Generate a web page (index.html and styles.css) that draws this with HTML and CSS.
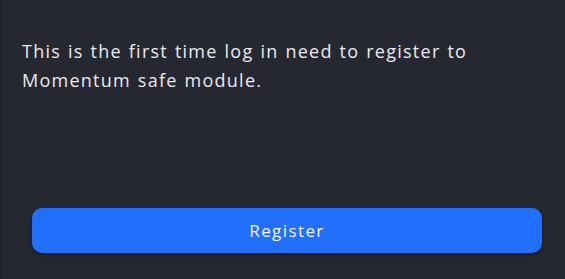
FILE: index.html
```html
<!DOCTYPE html>
<html lang="en">
<head>
<meta charset="utf-8">
<title>Register</title>
<link rel="stylesheet" href="styles.css">
</head>
<body>
<main class="panel">
  <p class="message">This is the first time log in need to register to Momentum safe module.</p>
  <button class="register-btn" type="button">Register</button>
</main>
</body>
</html>
```

FILE: styles.css
```css
html, body {
  margin: 0;
  padding: 0;
  height: 100%;
}

body {
  background: #252830;
  font-family: "Open Sans", "Noto Sans", sans-serif;
}

.panel {
  box-sizing: border-box;
  height: 100vh;
  display: flex;
  flex-direction: column;
  border-left: 2px solid #1f2228;
  padding: 0 23px 26px 20px;
}

.message {
  margin: 37px 0 0 0;
  color: #e9eaed;
  font-size: 18px;
  line-height: 29px;
  letter-spacing: 1.25px;
  word-spacing: 1px;
  max-width: 500px;
}

.register-btn {
  margin: auto 0 0 10px;
  height: 45px;
  border: none;
  border-radius: 10px;
  background: #226ffc;
  color: #f3f6ff;
  font-family: "Open Sans", "Noto Sans", sans-serif;
  font-size: 17px;
  font-weight: 500;
  letter-spacing: 1.4px;
  box-shadow: 0 2px 3px rgba(0, 0, 0, 0.35);
}
```
